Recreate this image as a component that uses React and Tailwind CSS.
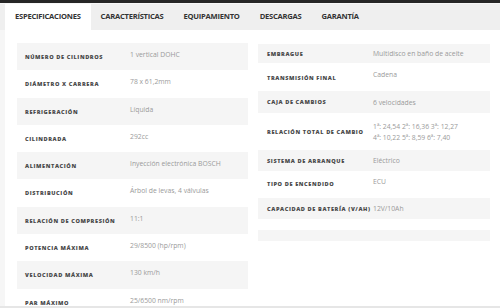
import React from 'react';

const tabs = ['ESPECIFICACIONES', 'CARACTERÍSTICAS', 'EQUIPAMIENTO', 'DESCARGAS', 'GARANTÍA'];

const left = [
  ['NÚMERO DE CILINDROS', '1 vertical DOHC'],
  ['DIÁMETRO X CARRERA', '78 x 61,2mm'],
  ['REFRIGERACIÓN', 'Líquida'],
  ['CILINDRADA', '292cc'],
  ['ALIMENTACIÓN', 'Inyección electrónica BOSCH'],
  ['DISTRIBUCIÓN', 'Árbol de levas, 4 válvulas'],
  ['RELACIÓN DE COMPRESIÓN', '11:1'],
  ['POTENCIA MÁXIMA', '29/8500 (hp/rpm)'],
  ['VELOCIDAD MÁXIMA', '130 km/h'],
  ['PAR MÁXIMO', '25/6500 nm/rpm'],
];

// right column rows have uneven heights in the source page
const right = [
  { label: 'EMBRAGUE', value: ['Multidisco en baño de aceite'], row: 'h-[19px] bg-[#f5f5f5] items-center', l: '', v: '' },
  { label: 'TRANSMISIÓN FINAL', value: ['Cadena'], row: 'h-[28px] items-start', l: 'pt-[11px]', v: 'pt-[6px]' },
  { label: 'CAJA DE CAMBIOS', value: ['6 velocidades'], row: 'h-[22px] bg-[#f5f5f5] items-center', l: '', v: '' },
  { label: 'RELACIÓN TOTAL DE CAMBIO', value: ['1ª: 24,54 2ª: 16,36 3ª: 12,27', '4ª: 10,22 5ª: 8,59 6ª: 7,40'], row: 'h-[37px] items-center', l: 'pt-[1px]', v: '' },
  { label: 'SISTEMA DE ARRANQUE', value: ['Eléctrico'], row: 'h-[21px] bg-[#f5f5f5] items-center', l: '', v: '' },
  { label: 'TIPO DE ENCENDIDO', value: ['ECU'], row: 'h-[27px] items-start', l: 'pt-[9px]', v: 'pt-[5px]' },
  { label: 'CAPACIDAD DE BATERÍA (V/AH)', value: ['12V/10Ah'], row: 'h-[21px] bg-[#f5f5f5] items-center', l: '', v: '' },
];

const labelCls = "font-['Open_Sans',sans-serif] font-extrabold whitespace-nowrap text-[5.6px] leading-[8px] tracking-[0.6px] text-[#4a4a4a]";
const valueCls = "font-['Open_Sans',sans-serif] whitespace-nowrap text-[6.8px] leading-[11px] text-[#9a9a9a]";

export default function App() {
  return (
    <div className="w-[500px] h-[308px] overflow-hidden bg-white flex flex-col">
      <div className="h-[3px] shrink-0 bg-[#262626]" />
      <div className="h-[1px] shrink-0 bg-[#f7f7f7]" />
      <div className="flex h-[26px] shrink-0 bg-[#efefef] pl-[5px]">
        {tabs.map((t, i) => (
          <div
            key={t}
            className={
              (i === 0 ? 'bg-white ' : '') +
              "flex items-center px-[10px] font-['Open_Sans',sans-serif] font-bold text-[7.6px] tracking-[-0.25px] text-[#333]"
            }
          >
            {t}
          </div>
        ))}
      </div>
      <div className="flex flex-1 min-h-0 overflow-hidden">
        <div className="w-[5px] bg-[#f6f6f6]" />
        <div className="flex flex-1 pt-[13px] pl-[12px] pr-[10px] gap-[10px]">
          <div className="w-[231px] flex flex-col">
            {left.map(([l, v], i) => (
              <div key={l} className={(i % 2 === 0 ? 'bg-[#f5f5f5] ' : '') + 'h-[27.3px] flex items-start shrink-0'}>
                <div className={labelCls + ' w-[113px] shrink-0 pl-[8px] pt-[10px]'}>{l}</div>
                <div className={valueCls + ' pt-[6px]'}>{v}</div>
              </div>
            ))}
          </div>
          <div className="w-[232px] flex flex-col pt-[1px]">
            {right.map((r) => (
              <div key={r.label} className={'flex shrink-0 ' + r.row}>
                <div className={labelCls + ' w-[115px] shrink-0 pl-[9px] ' + r.l}>{r.label}</div>
                <div className={valueCls + ' ' + r.v}>
                  {r.value.map((x) => (
                    <div key={x}>{x}</div>
                  ))}
                </div>
              </div>
            ))}
            <div className="h-[11px] shrink-0" />
            <div className="h-[11px] shrink-0 bg-[#f5f5f5]" />
          </div>
        </div>
      </div>
      <div className="h-[2px] shrink-0 bg-[#e6e6e6]" />
    </div>
  );
}
